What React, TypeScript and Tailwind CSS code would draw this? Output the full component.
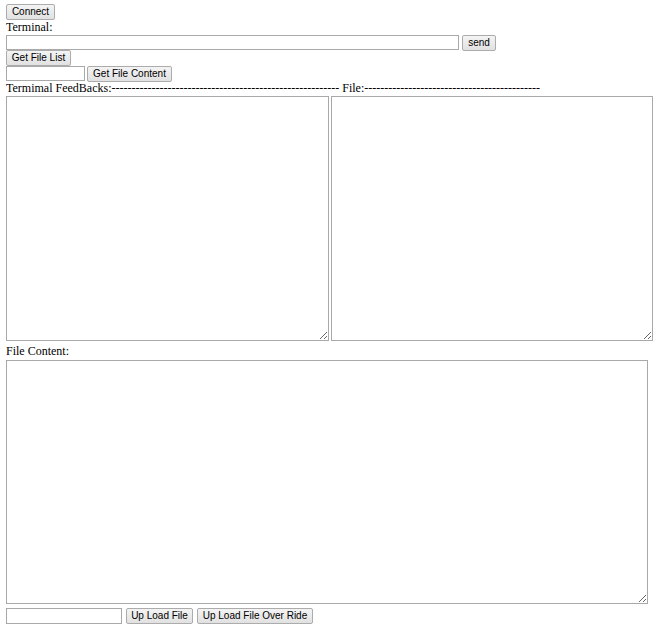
import React from 'react';

const btn =
    "h-[16px] px-[2px] text-[10px] leading-[14px] text-center text-black border border-[#acacac] rounded-[2px] bg-gradient-to-b from-[#f4f4f4] to-[#e1e1e1] whitespace-nowrap";
const field = "h-[15px] border border-[#a9a9a9] bg-white";
const area = "border border-[#a9a9a9] bg-white resize-y";
const sans = { fontFamily: '"Liberation Sans", Arial, sans-serif' };

const App: React.FC = () => {
    return (
        <div className="min-h-screen bg-white pl-[6px] pt-[4px] text-[12px] leading-[15px] text-black" style={{ fontFamily: '"Liberation Serif", "Times New Roman", serif' }}>
            <div className="flex" style={sans}>
                <button className={`${btn} w-[49px]`}>Connect</button>
            </div>
            <div className="h-[15px]">Terminal:</div>
            <div className="flex items-start h-[15px]" style={sans}>
                <input className={`${field} w-[453px]`} />
                <button className={`${btn} w-[34px] ml-[3px]`}>send</button>
            </div>
            <div className="flex" style={sans}>
                <button className={`${btn} w-[65px]`}>Get File List</button>
            </div>
            <div className="flex items-start h-[15px]" style={sans}>
                <input className={`${field} w-[79px]`} />
                <button className={`${btn} w-[85px] ml-[2px]`}>Get File Content</button>
            </div>
            <div className="h-[15px] whitespace-nowrap">
                Termimal FeedBacks:--------------------------------------------------------- File:--------------------------------------------
            </div>
            <div className="flex gap-[2px]">
                <textarea className={`${area} w-[323px] h-[245px]`} />
                <textarea className={`${area} w-[322px] h-[245px]`} />
            </div>
            <div className="h-[19px] pt-[3px]">File Content:</div>
            <div className="flex">
                <textarea className={`${area} w-[642px] h-[244px]`} />
            </div>
            <div className="flex items-start gap-[4px] mt-[4px]" style={sans}>
                <input className={`${field} w-[116px] h-[16px]`} />
                <button className={`${btn} w-[67px]`}>Up Load File</button>
                <button className={`${btn} w-[116px]`}>Up Load File Over Ride</button>
            </div>
        </div>
    );
};

export default App;
